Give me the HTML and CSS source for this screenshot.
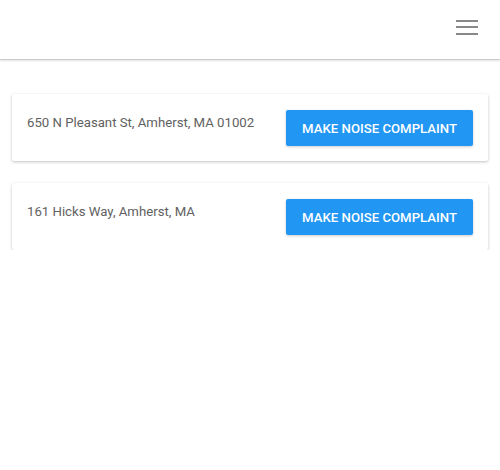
FILE: index.html
```html
<!DOCTYPE html>
<html lang="en">
<head>
<meta charset="UTF-8">
<meta name="viewport" content="width=device-width, initial-scale=1.0">
<title>Noise Complaints</title>
<link rel="stylesheet" href="styles.css">
</head>
<body>

<header class="topbar">
  <!-- Menu button -->
  <button type="button" class="menu-button" aria-label="Menu">
    <span></span>
    <span></span>
    <span></span>
  </button>
</header>

<div class="container">
  <div class="card">
    <p class="address">650 N Pleasant St, Amherst, MA 01002</p>
    <button type="button" class="button">Make Noise Complaint</button>
  </div>

  <div class="card">
    <p class="address">161 Hicks Way, Amherst, MA</p>
    <button type="button" class="button">Make Noise Complaint</button>
  </div>
</div>

</body>
</html>
```

FILE: styles.css
```css
body {
  font-family: Roboto, "Liberation Sans", sans-serif;
  margin: 0;
  padding: 0;
  background-color: #fff;
}
.topbar {
  height: 59px;
  border-bottom: 1px solid #ccc;
  box-shadow: 0 1px 2px rgba(0, 0, 0, 0.12);
  display: flex;
  justify-content: flex-end;
  align-items: center;
  padding: 0 22px;
}
.menu-button {
  background: none;
  border: none;
  padding: 0;
  width: 22px;
  height: 15px;
  display: flex;
  flex-direction: column;
  justify-content: space-between;
  cursor: pointer;
  margin-bottom: 5px;
}
.menu-button span {
  display: block;
  height: 2px;
  background-color: #888;
}
.container {
  padding: 34px 12px 0;
  display: flex;
  flex-direction: column;
  gap: 22px;
}
.card {
  background-color: #fff;
  border-radius: 2px;
  box-shadow: 0 1px 3px rgba(0, 0, 0, 0.25);
  padding: 16px 15px 15px;
  display: flex;
  justify-content: space-between;
  align-items: flex-start;
}
.address {
  margin: 0;
  padding-top: 3px;
  font-size: 13.2px;
  line-height: 20px;
  color: #616161;
}
.button {
  background-color: #2196F3;
  border: none;
  color: white;
  height: 36px;
  padding: 0 16px;
  font-family: Roboto, "Liberation Sans", sans-serif;
  font-size: 13.2px;
  font-weight: 500;
  text-transform: uppercase;
  border-radius: 2px;
  box-shadow: 0 1px 3px rgba(0, 0, 0, 0.2);
  cursor: pointer;
}
```
